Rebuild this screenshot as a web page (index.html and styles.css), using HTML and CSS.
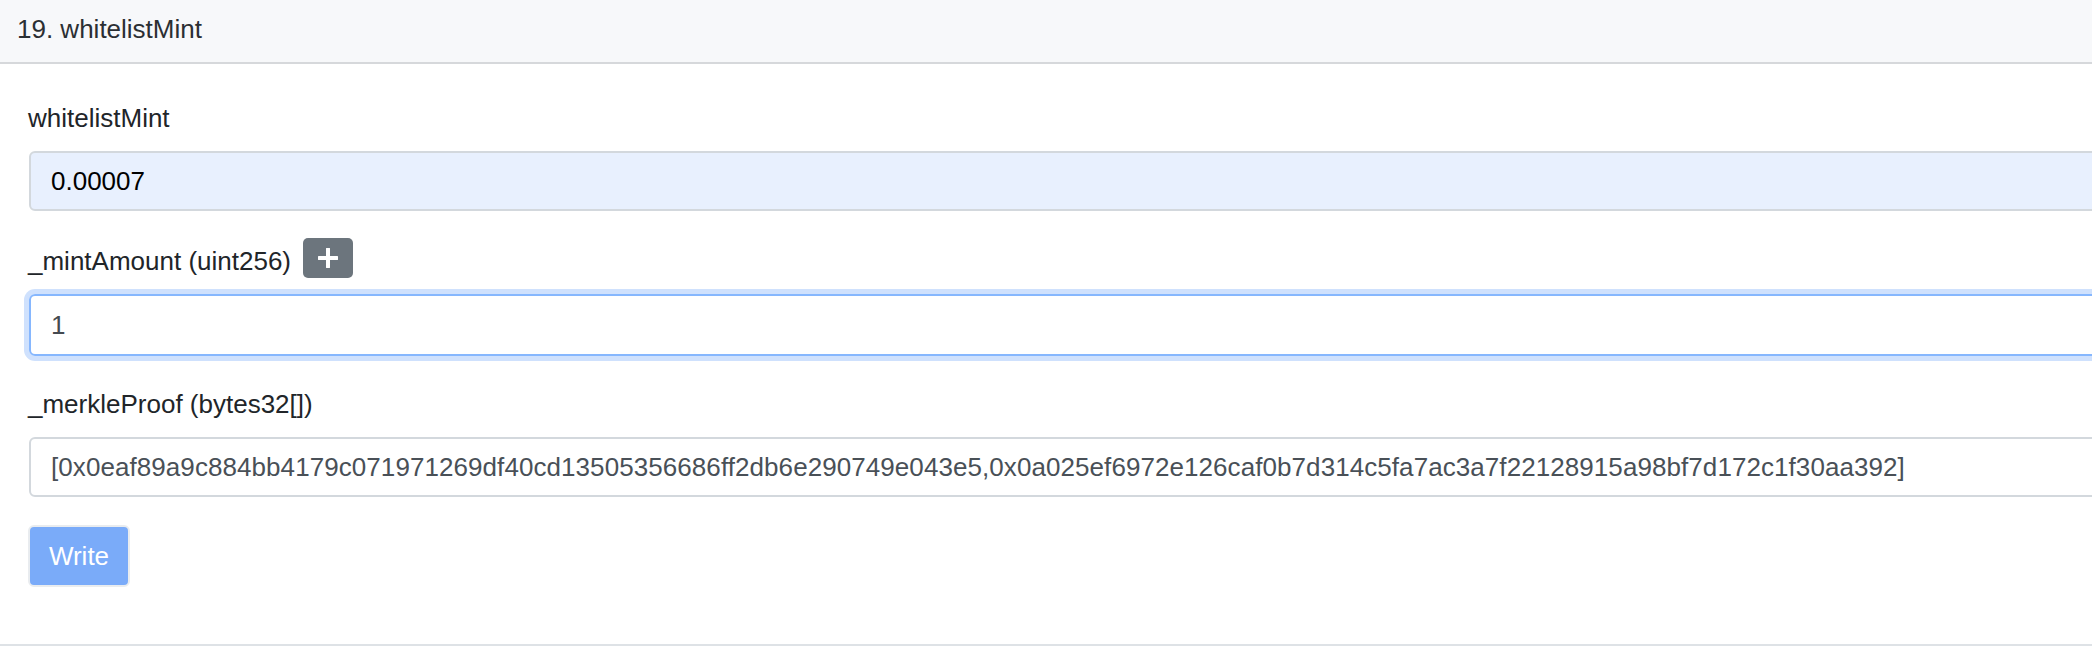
FILE: index.html
```html
<!DOCTYPE html>
<html>
<head>
<meta charset="utf-8">
<link rel="stylesheet" href="styles.css">
</head>
<body>
<div class="card">
  <div class="card-header">19. whitelistMint</div>
  <div class="card-body">
    <div class="field">
      <label class="label">whitelistMint</label>
      <div class="input input-autofill">0.00007</div>
    </div>
    <div class="field">
      <div class="label-row">
        <label class="label">_mintAmount (uint256)</label>
        <button class="btn-plus" type="button">
          <svg width="20" height="20" viewBox="0 0 20 20"><path d="M10 1v18M1 10h18" stroke="#fff" stroke-width="4" stroke-linecap="round" fill="none"/></svg>
        </button>
      </div>
      <div class="input input-focus">1</div>
    </div>
    <div class="field">
      <label class="label">_merkleProof (bytes32[])</label>
      <div class="input input-long">[0x0eaf89a9c884bb4179c071971269df40cd13505356686ff2db6e290749e043e5,0x0a025ef6972e126caf0b7d314c5fa7ac3a7f22128915a98bf7d172c1f30aa392]</div>
    </div>
    <button class="btn-write" type="button">Write</button>
  </div>
</div>
</body>
</html>
```
FILE: styles.css
```css
html, body {
  margin: 0;
  padding: 0;
  background: #fff;
  overflow: hidden;
}
body {
  font-family: "Liberation Sans", Arial, sans-serif;
  font-size: 26px;
  color: #212529;
  width: 2092px;
}
.card {
  border-bottom: 2px solid #dee2e6;
}
.card-header {
  background: #f7f8fa;
  padding: 10px 17px 13px;
  line-height: 39px;
  height: 39px;
  border-bottom: 2px solid #d6d8db;
  color: #2b2f33;
}
.card-body {
  padding: 34px 0 57px 28px;
}
.field {
  margin-bottom: 28px;
}
.label {
  display: block;
  line-height: 41px;
  height: 41px;
  margin-bottom: 12px;
  color: #212529;
}
.label-row {
  display: flex;
  align-items: flex-start;
  height: 43px;
  margin-bottom: 12px;
}
.label-row .label {
  padding-top: 2px;
  margin-bottom: 0;
}
.btn-plus {
  margin: -1px 0 0 12px;
  width: 50px;
  height: 40px;
  border: none;
  border-radius: 5px;
  background: #6c757d;
  display: flex;
  align-items: center;
  justify-content: center;
  padding: 0;
}
.input {
  box-sizing: border-box;
  width: 2120px;
  height: 60px;
  margin-left: 1px;
  border: 2px solid #d3d8dd;
  border-radius: 6px;
  padding: 0 20px;
  line-height: 56px;
  color: #495057;
  white-space: nowrap;
  overflow: hidden;
}
.input-long {
  letter-spacing: 0.07px;
}
.input-autofill {
  background: #e8f0fe;
  color: #000;
}
.input-focus {
  height: 62px;
  line-height: 58px;
  border-color: #86b7fe;
  box-shadow: 0 0 0 5px #cfe1fd;
  color: #444a50;
}
.btn-write {
  display: block;
  margin-left: 0;
  box-sizing: border-box;
  width: 102px;
  height: 62px;
  border: 2px solid #e9ecef;
  border-radius: 6px;
  background: #7aabf9;
  color: #fff;
  font-family: "Liberation Sans", Arial, sans-serif;
  font-size: 26px;
  padding: 0;
}
```
